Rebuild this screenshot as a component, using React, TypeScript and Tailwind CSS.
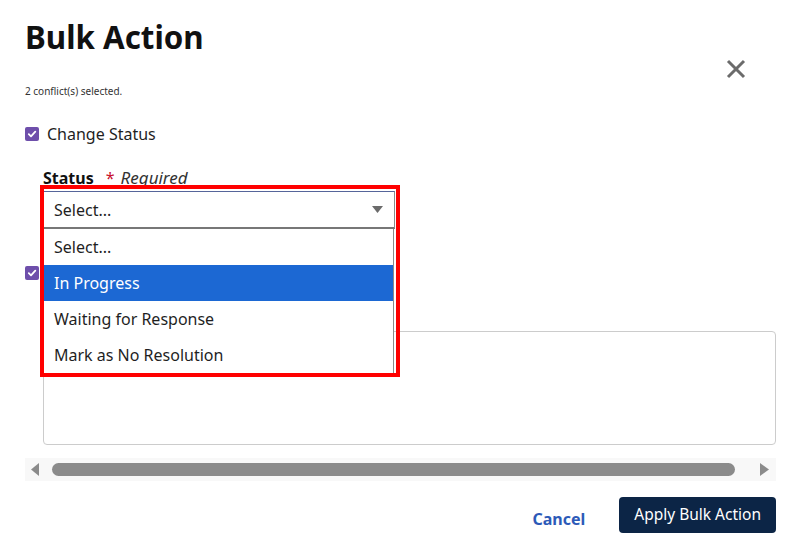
import React from "react";

const options = ["Select...", "In Progress", "Waiting for Response", "Mark as No Resolution"];

function Check() {
  return (
    <span className="flex h-[14px] w-[14px] shrink-0 items-center justify-center rounded-[2px] bg-[#6e4fab]">
      <svg width="10" height="10" viewBox="0 0 10 10">
        <path d="M1.8 5.2 L4 7.3 L8.3 2.6" fill="none" stroke="#fff" strokeWidth="1.8" strokeLinecap="round" strokeLinejoin="round" />
      </svg>
    </span>
  );
}

export default function App() {
  return (
    <div
      className="relative h-[553px] w-[801px] overflow-hidden bg-white pl-[25px] pr-[25px] text-[#1f1f1f]"
      style={{ fontFamily: '"Noto Sans", "Open Sans", sans-serif' }}
    >
      <div className="flex items-start justify-between pt-[18px]">
        <h1 className="text-[31.3px] font-bold leading-[38px] text-[#111]">Bulk Action</h1>
        <button className="mr-[30px] mt-[41px] h-[20px] w-[20px]">
          <svg width="20" height="20" viewBox="0 0 20 20">
            <path d="M2 2 L18 18 M18 2 L2 18" stroke="#6b6b6b" strokeWidth="3" />
          </svg>
        </button>
      </div>

      <p className="mt-[5px] text-[10px] leading-[14px] text-[#333]">2 conflict(s) selected.</p>

      <label className="mt-[26px] flex h-[20px] items-center gap-[8px] text-[16px] leading-[20px]">
        <Check />
        <span>Change Status</span>
      </label>

      <div className="ml-[18px] mt-[24px] flex items-baseline text-[16px] leading-[20px]">
        <span className="font-bold text-[#111]">Status</span>
        <span className="ml-[12px] text-[#c8102e]">*</span>
        <span className="ml-[6px] text-[17px] italic text-[#333]">Required</span>
      </div>

      <div className="relative ml-[18px] mt-[3px] w-[352px]">
        <div className="flex h-[38px] items-center justify-between border border-[#8a8a8a] border-t-[#56659a] border-b-2 border-b-[#777] bg-white pl-[10px] pr-[11px] text-[16px]">
          <span>Select...</span>
          <svg width="11" height="7" viewBox="0 0 11 7">
            <path d="M0 0 L11 0 L5.5 7 Z" fill="#6b6b6b" />
          </svg>
        </div>
        <ul className="absolute left-0 top-[38px] z-10 w-[351px] border-x border-b border-[#8a8a8a] bg-white text-[16px]">
          {options.map((o) => (
            <li
              key={o}
              className={
                o === "In Progress"
                  ? "flex h-[36px] items-center bg-[#1c68d3] pl-[10px] text-white"
                  : "flex h-[36px] items-center pl-[10px] text-[#1f1f1f]"
              }
            >
              {o}
            </li>
          ))}
        </ul>
        <div className="pointer-events-none absolute -left-[3px] -top-[6px] z-20 h-[192px] w-[360px] border-4 border-[#ff0000]" />
      </div>

      {/* second option row, its label sits under the open dropdown */}
      <div className="mt-[34px] flex h-[20px] items-center" aria-label="Add Comment">
        <Check />
      </div>

      <textarea className="ml-[18px] mt-[48px] block h-[114px] w-[733px] resize-none rounded-[4px] border border-[#cccccc] outline-none" />

      <div className="mt-[13px] flex h-[23px] items-center bg-[#f8f8f8] pl-[6px] pr-[7px]">
        <svg width="8" height="13" viewBox="0 0 8 13">
          <path d="M8 0 L8 13 L0 6.5 Z" fill="#8b8b8b" />
        </svg>
        <div className="ml-[13px] h-[13px] w-[683px] rounded-full bg-[#8b8b8b]" />
        <div className="flex-1" />
        <svg width="9" height="13" viewBox="0 0 9 13">
          <path d="M0 0 L0 13 L9 6.5 Z" fill="#8b8b8b" />
        </svg>
      </div>

      <div className="mt-[16px] flex items-center justify-end gap-[34px]">
        <button className="mt-[8px] text-[16px] font-bold text-[#2c5ab8]">Cancel</button>
        <button className="h-[36px] rounded-[4px] bg-[#0c2546] px-[15px] text-[15.5px] text-white">
          Apply Bulk Action
        </button>
      </div>
    </div>
  );
}
